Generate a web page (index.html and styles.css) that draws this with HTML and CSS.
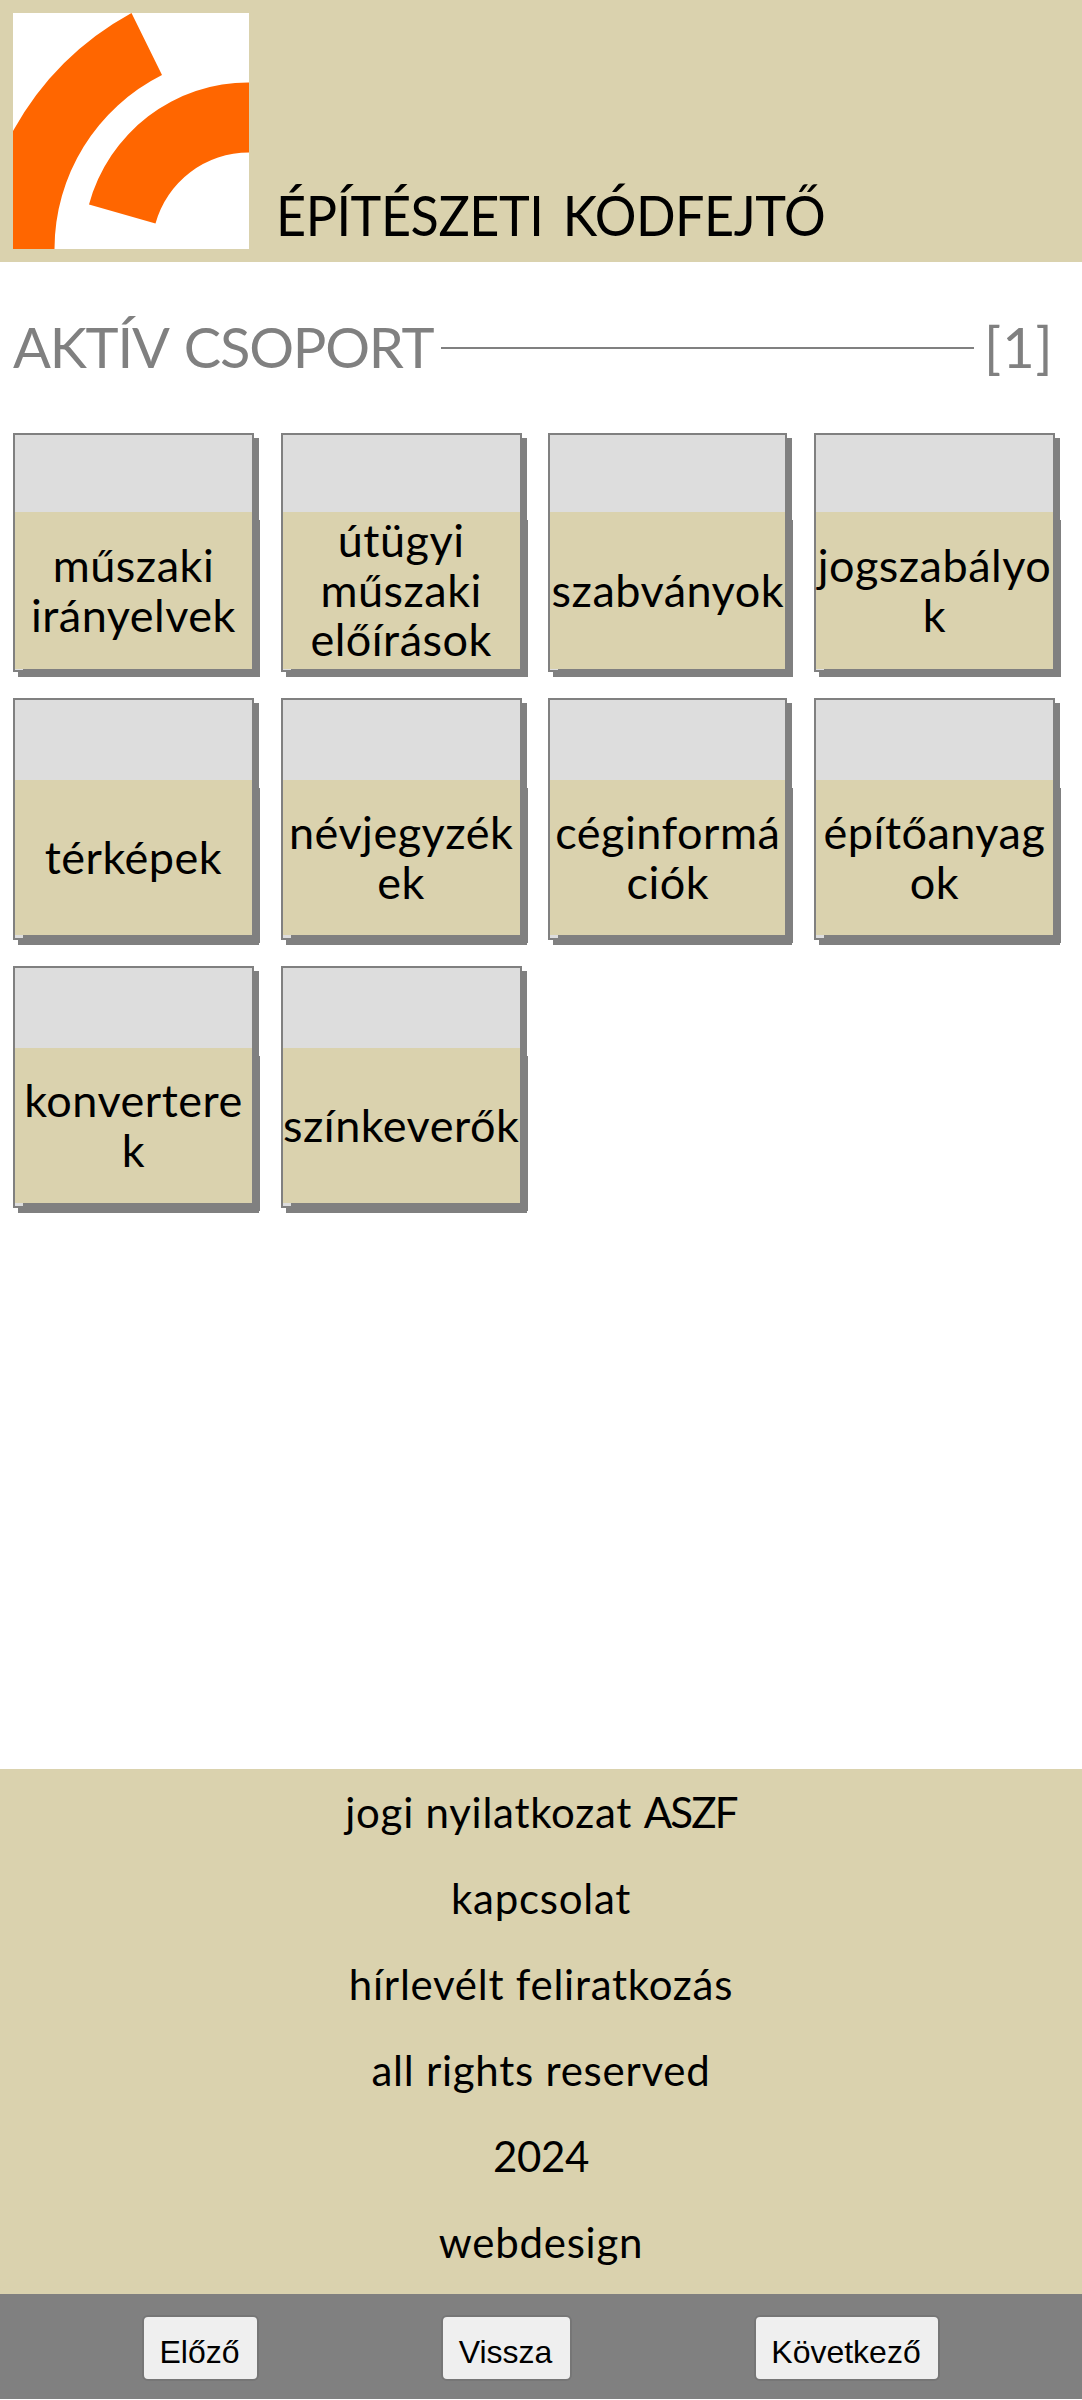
FILE: index.html
```html
<!DOCTYPE html>
<html lang="hu">
<head>
<meta charset="utf-8">
<title>Építészeti kódfejtő</title>
<link rel="stylesheet" href="styles.css">
</head>
<body>
<header class="header">
  <svg class="logo" viewBox="0 0 236 236">
    <rect width="236" height="236" fill="#fff"/>
    <path fill="#f60" d="M0 118A300 300 0 0 1 118.500 0L149 62A195 195 0 0 0 41.500 236H0Z"/>
    <path fill="#f60" d="M236 69.500A165 165 0 0 0 76 191.500L142.500 210.500A97 97 0 0 1 236 139.500Z"/>
  </svg>
  <h1 class="title">ÉPÍTÉSZETI KÓDFEJTŐ</h1>
</header>
<main class="main">
  <div class="group">
    <h2 class="group-name">AKTÍV CSOPORT</h2>
    <div class="rule"></div>
    <span class="group-no">[1]</span>
  </div>
  <div class="grid">
    <a class="card"><span class="label">műszaki<br>irányelvek</span></a>
    <a class="card"><span class="label">útügyi<br>műszaki<br>előírások</span></a>
    <a class="card"><span class="label">szabványok</span></a>
    <a class="card"><span class="label">jogszabályo<br>k</span></a>
    <a class="card"><span class="label">térképek</span></a>
    <a class="card"><span class="label">névjegyzék<br>ek</span></a>
    <a class="card"><span class="label">céginformá<br>ciók</span></a>
    <a class="card"><span class="label">építőanyag<br>ok</span></a>
    <a class="card"><span class="label">konvertere<br>k</span></a>
    <a class="card"><span class="label">színkeverők</span></a>
  </div>
</main>
<footer class="footer">
  <a>jogi nyilatkozat <span class="abbr">ASZF</span></a>
  <a>kapcsolat</a>
  <a>hírlevélt feliratkozás</a>
  <a>all rights reserved</a>
  <a class="year">2024</a>
  <a>webdesign</a>
</footer>
<nav class="pager">
  <button class="btn prev">Előző</button>
  <button class="btn back">Vissza</button>
  <button class="btn next">Következő</button>
</nav>
</body>
</html>
```
FILE: styles.css
```css
* { box-sizing: border-box; }
body {
  margin: 0;
  height: 2400px;
  display: flex;
  flex-direction: column;
  background: #fff;
  color: #000;
  font-family: Lato, sans-serif;
}
.header {
  height: 262px;
  flex: none;
  display: flex;
  align-items: flex-end;
  gap: 27px;
  padding: 0 13px;
  background: #dad2ae;
}
.logo { width: 236px; height: 236px; margin-bottom: 13px; display: block; }
.title {
  margin: 0 0 14px;
  font-size: 56px;
  line-height: 66px;
  font-weight: 400;
  letter-spacing: -0.5px;
  word-spacing: 7px;
  white-space: nowrap;
  transform: scaleX(0.931);
  transform-origin: 0 50%;
}
.main { flex: 1; padding: 49px 13px 0; }
.group { display: flex; align-items: center; height: 72px; color: #808080; font-size: 56px; line-height: 72px; }
.group-name { margin: 0; width: 428px; font-size: 56px; font-weight: 400; letter-spacing: -1.2px; word-spacing: 4px; white-space: nowrap; }
.rule { width: 533px; height: 2px; margin-top: 2px; background: #808080; }
.group-no { margin-left: 10px; letter-spacing: 1px; }
.grid {
  display: grid;
  grid-template-columns: 241px 241px 239px 241px;
  grid-template-rows: 239px 242px 242px;
  column-gap: 26.67px;
  row-gap: 26px;
  margin-top: 50px;
}
.card {
  border: 2px solid #808080;
  background: #ddd;
  box-shadow: 5px 5px 0 #808080;
  padding: 77px 0 0;
}
.label {
  display: flex;
  height: 157px;
  text-align: center;
  align-items: center;
  justify-content: center;
  background: #dad2ae;
  box-shadow: 8px 8px 0 #808080;
  font-size: 45px;
  line-height: 49.5px;
  letter-spacing: 0.5px;
  white-space: nowrap;
}
.card:nth-child(n + 5) { padding-top: 80px; }
.card:nth-child(n + 5) .label { height: 155px; }
.footer {
  height: 525px;
  flex: none;
  display: flex;
  flex-direction: column;
  align-items: center;
  background: #dad2ae;
  font-size: 42px;
  line-height: 86px;
  letter-spacing: 0.75px;
}
.abbr { letter-spacing: -1.8px; }
.year { letter-spacing: -0.4px; }
.pager {
  height: 106px;
  flex: none;
  display: flex;
  padding: 21px 0 0 142px;
  border-bottom: 1px solid #fff;
  background: #808080;
}
.btn {
  height: 66px;
  border: 2px solid #767676;
  border-radius: 6px;
  background: #efefef;
  padding: 8px 2px 0 0;
  font: 32px "Liberation Sans", Arial, sans-serif;
}
.prev { width: 117px; }
.back { width: 131px; margin-left: 182px; }
.next { width: 186px; margin-left: 182px; }
```
